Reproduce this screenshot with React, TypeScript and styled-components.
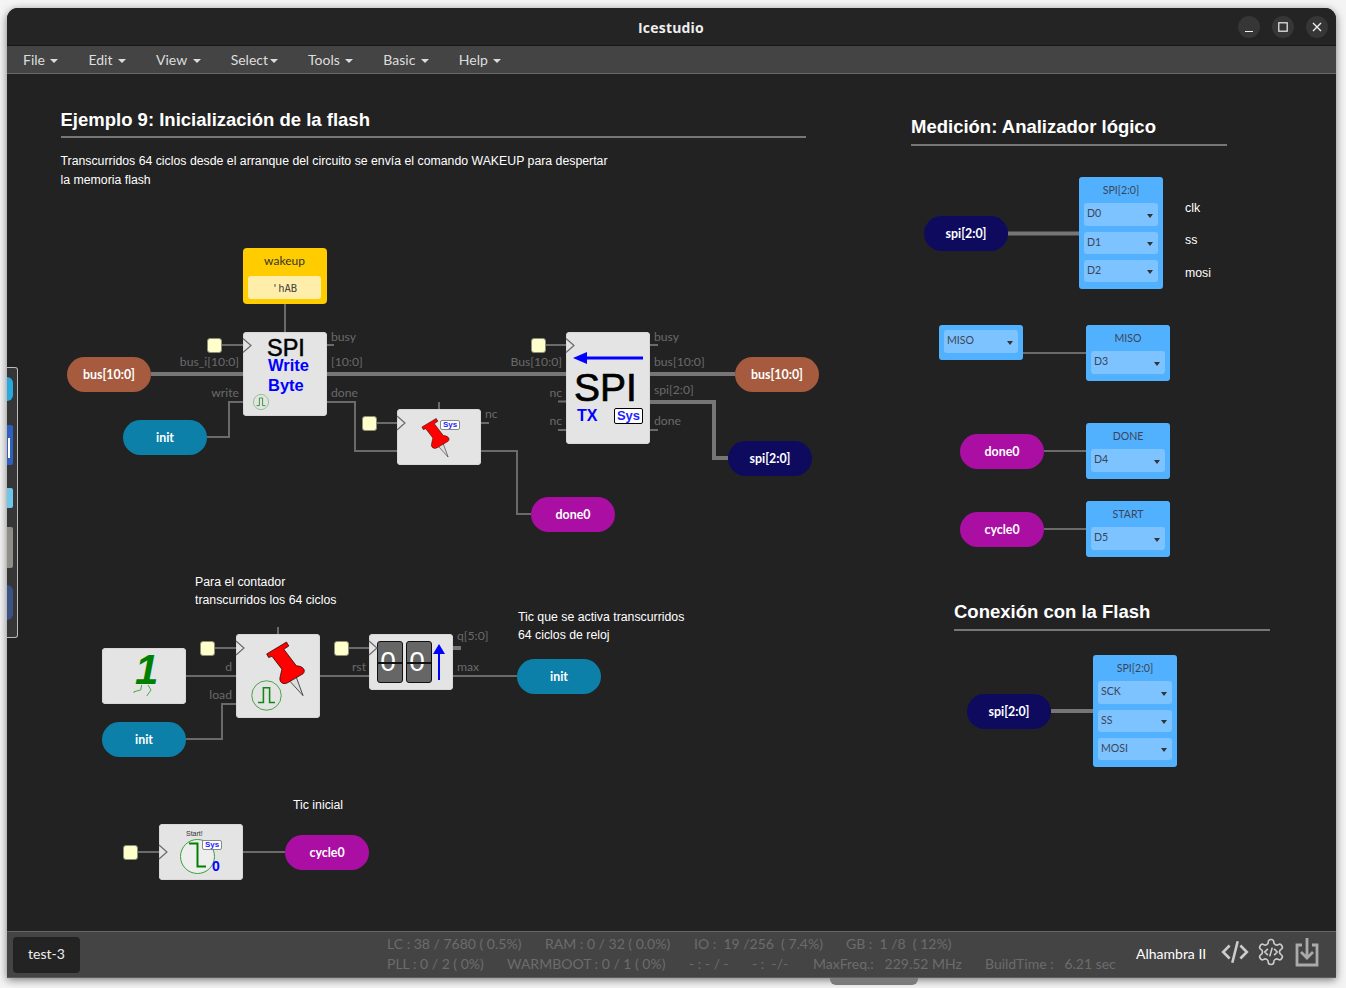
import React from 'react';
import styled, { createGlobalStyle, css } from 'styled-components';

const Global = createGlobalStyle`
  html, body { margin: 0; padding: 0; background: #fff; overflow: hidden; }
  body { font-family: Lato, "Liberation Sans", sans-serif; }
`;

const Page = styled.div`
  width: 1346px; height: 988px; padding: 8px 0 0 7px; box-sizing: border-box; position: relative; overflow: hidden;
  background: #f4f4f4;
`;
const Window = styled.div`
  width: 1329px; height: 970px; display: flex; flex-direction: column;
  border-radius: 11px 11px 0 0; background: #222; overflow: hidden;
  box-shadow: 0 2px 9px rgba(0,0,0,.5);
`;
const TitleBar = styled.header`
  height: 37px; flex: none; position: relative; display: flex; align-items: center; justify-content: center;
  background: #242424; border-bottom: 1px solid #161616; box-sizing: content-box;
`;
const Title = styled.div`
  font: 700 14px "Open Sans", Lato, sans-serif; color: #eee; letter-spacing: .2px;
  margin-left: -1px; margin-top: 2px;
`;
const WinControls = styled.div`
  position: absolute; right: 8px; top: 8px; display: flex; gap: 12px;
`;
const WinButton = styled.div`
  width: 22px; height: 22px; border-radius: 50%; background: #363636; display: flex; align-items: center; justify-content: center;
`;
const Menu = styled.nav`
  height: 27px; flex: none; background: #444; border-bottom: 1px solid #6a6a6a; display: flex; align-items: center; padding-left: 1px;
`;
const MenuItem = styled.div<{ $tight?: boolean }>`
  padding: 0 15px; color: #ddd; font-size: 14px; display: flex; align-items: center; white-space: nowrap;
  &::after {
    content: ''; margin-left: ${p => (p.$tight ? 2 : 5.5)}px; margin-top: 2px;
    border-left: 4px solid transparent; border-right: 4px solid transparent; border-top: 4px solid #ddd;
  }
`;
const Canvas = styled.main`
  flex: 1; position: relative; background: #222; overflow: hidden;
`;
const Wires = styled.svg`
  position: absolute; left: 0; top: 0; width: 1329px; height: 857px;
`;
const at = css<{ $x: number; $y: number }>`
  position: absolute; left: ${p => p.$x - 7}px; top: ${p => p.$y - 74}px;
`;
const Heading = styled.h2<{ $x: number; $y: number; $w: number; $h: number }>`
  ${at}; margin: 0; width: ${p => p.$w}px; box-sizing: border-box; height: ${p => p.$h}px;
  font: 700 18.500px/24px "Liberation Sans", sans-serif; color: #fff;
  border-bottom: 2px solid #777;
`;
const Note = styled.div<{ $x: number; $y: number }>`
  ${at}; font: 12.300px/18.500px "Liberation Sans", sans-serif; color: #fff; white-space: nowrap;
`;
const Port = styled.span<{ $x?: number; $right?: number; $y: number }>`
  position: absolute; top: ${p => p.$y - 74 - 8}px; height: 16px; line-height: 16px;
  ${p => (p.$right !== undefined ? `right: ${1336 - p.$right}px;` : `left: ${(p.$x ?? 0) - 7}px;`)}
  font: 12.200px/16px Lato, sans-serif; color: #6a6a6a; white-space: nowrap;
`;
const Pill = styled.div<{ $x: number; $y: number; $c: string }>`
  ${at}; width: 84px; height: 35px; padding-bottom: 0; box-sizing: border-box; border-radius: 18px; background: ${p => p.$c};
  display: flex; align-items: center; justify-content: center;
  color: #fff; font: 700 12.400px Lato, sans-serif;
`;
const Pin = styled.div<{ $x: number; $y: number }>`
  ${at}; width: 15px; height: 15px; box-sizing: border-box; border-radius: 3px; background: #ffffcc; border: 1px solid #8d8d78;
`;
const Block = styled.div<{ $x: number; $y: number; $w?: number; $h: number }>`
  ${at}; width: ${p => p.$w ?? 84}px; height: ${p => p.$h}px; background: #e4e4e4; border-radius: 4px;
  box-shadow: inset 0 0 0 1px #d8d8d8; overflow: visible;
`;
const Constant = styled.div<{ $x: number; $y: number }>`
  ${at}; width: 84px; height: 56px; box-sizing: border-box; padding: 0 6px 0 5px; background: #ffcc00; border-radius: 4px;
  display: flex; flex-direction: column; align-items: stretch; text-align: center;
  font: 12px Lato, sans-serif; color: #333;
`;
const ConstantLabel = styled.div`
  height: 28px; line-height: 26px;
`;
const ConstantValue = styled.div`
  height: 23px; background: #ffeeaa; border-radius: 3px; font: 10.500px/25px "DejaVu Sans Mono", monospace; color: #444;
`;
const SpiSymbol = styled.div`
  display: flex; flex-direction: column; align-items: flex-start; padding: 4px 0 0 24px; font-family: "Liberation Sans", sans-serif;
`;
const SpiWord = styled.div`
  font-size: 23.500px; line-height: 19px; color: #000; -webkit-text-stroke: .5px #000; padding-top: 3px; height: 16px;
`;
const BlueWord = styled.div<{ $ml?: number; $size?: number }>`
  font-size: ${p => p.$size ?? 16.500}px; font-weight: 700; line-height: 20px; color: #0000ff; margin-left: ${p => p.$ml ?? 0}px;
`;
const TxSymbol = styled.div`
  display: flex; flex-direction: column; padding: 37px 7px 0 8px; font-family: "Liberation Sans", sans-serif;
`;
const TxWord = styled.div`
  font-size: 39px; line-height: 38px; color: #000; -webkit-text-stroke: .7px #000;
`;
const TxRow = styled.div`
  display: flex; align-items: center; justify-content: space-between; margin: 1px 0 0 3px; height: 16px;
`;
const Sys = styled.div<{ $small?: boolean }>`
  background: #fff; color: #2222ff; font-family: "Liberation Sans", sans-serif; font-weight: 700; text-align: center; box-sizing: border-box;
  ${p => (p.$small
    ? `position:absolute; width:20px; height:10px; font-size:8px; line-height:8px; border:1px solid #888; border-radius:2px;`
    : `width:29px; height:16px; font-size:13px; line-height:14px; border:1px solid #000; border-radius:2px;`)}
`;
const Draw = styled.svg<{ $l: number; $t: number }>`
  position: absolute; left: ${p => p.$l}px; top: ${p => p.$t}px; overflow: visible;
`;
const OneDigit = styled.div`
  position: absolute; left: 33px; top: 0; font: italic 700 42px/44px "Liberation Sans", sans-serif; color: #008000;
`;
const Flip = styled.div`
  width: 26px; height: 42px; box-sizing: border-box; padding-right: 4px; background: #666; border: 1px solid #111; border-radius: 3px;
  display: flex; align-items: center; justify-content: center; color: #fff; font: 28px/40px "Liberation Sans", sans-serif; position: relative;
  &::after { content: ''; position: absolute; left: -1px; right: -1px; top: 20px; height: 2px; background: #111; }
`;
const FlipRow = styled.div`
  position: absolute; left: 8px; top: 7px; display: flex; gap: 3px;
`;
const StartLabel = styled.div`
  position: absolute; left: 27px; top: 6px; font: 7px/8px "Liberation Sans", sans-serif; color: #333;
`;
const BlueZero = styled.div`
  position: absolute; left: 53px; top: 34px; font: 700 14px/16px "Liberation Sans", sans-serif; color: #0000ff;
`;
const Chip = styled.div<{ $x: number; $y: number }>`
  ${at}; width: 84px; box-sizing: border-box; padding: 5px 5px 7px; background: #52b1ff; border-radius: 3px;
  display: flex; flex-direction: column; gap: 5.800px;
  font: 10.600px Lato, sans-serif; color: #3a4658;
`;
const ChipTitle = styled.div`
  height: 15.500px; line-height: 17px; text-align: center;
`;
const ChipRow = styled.div`
  height: 22.500px; border-radius: 3px; background: #7dc3ff; display: flex; align-items: flex-start; justify-content: space-between;
  padding: 3px 3px 0 3px; box-sizing: border-box; line-height: 14px;
  &::after {
    content: ''; margin-top: 7.500px; margin-right: 2.500px;
    border-left: 3.500px solid transparent; border-right: 3.500px solid transparent; border-top: 4.500px solid #333;
  }
`;
const Footer = styled.footer`
  height: 47px; flex: none; box-sizing: border-box; background: #444; border-top: 1px solid #666; border-bottom: 1px solid #5c5c5c;
  display: flex; align-items: center; padding: 0 17px 0 6px; position: relative;
`;
const ProjectTag = styled.div`
  width: 67px; height: 36px; flex: none; border-radius: 4px; background: #232323; color: #eee; font: 14px/34px Lato, sans-serif; text-align: center;
`;
const Stats = styled.div`
  margin-left: 307px; margin-top: -2px; display: flex; flex-direction: column; gap: 2px;
  font: 14px/18px Lato, sans-serif; color: #6c6c6c; white-space: nowrap;
`;
const StatRow = styled.div`
  display: flex;
`;
const Stat = styled.span<{ $w: number }>`
  width: ${p => p.$w}px; white-space: pre;
`;
const Board = styled.div`
  position: absolute; left: 1129px; top: 13px; color: #fff; font: 14px/18px Lato, sans-serif; white-space: nowrap;
`;
const FootIcons = styled.div`
  margin-left: auto; display: flex; align-items: center; gap: 7px; color: #ccc; margin-top: -5px;
`;
const Dock = styled.aside`
  position: absolute; left: 7px; top: 367px; width: 11px; height: 271px; box-sizing: border-box; background: #363636;
  border: 1px solid #bbb; border-left: none; border-radius: 0 3px 3px 0;
`;
const DockItem = styled.div<{ $t: number; $h: number; $w?: number; $c: string; $r?: string }>`
  position: absolute; left: 0; top: ${p => p.$t}px; width: ${p => p.$w ?? 6}px; height: ${p => p.$h}px; background: ${p => p.$c};
  border-radius: ${p => p.$r ?? '0 2px 2px 0'};
`;
const DockMark = styled.div`
  position: absolute; left: 1px; top: 13px; width: 2px; height: 20px; background: #fff;
`;
const Grabber = styled.div`
  position: absolute; left: 830px; top: 978px; width: 88px; height: 7px; background: #7b7b7b; border-radius: 0 0 6px 6px;
`;

const PushPin: React.FC<{ w: number; h: number; l: number; t: number }> = ({ w, h, l, t }) => (
  <Draw $l={l} $t={t} width={w} height={h} viewBox="522 58 130 172">
    <path d="M598 180 L640 226 L618 166 Z" fill="#ddd" stroke="#000" strokeWidth="2" />
    <path d="M530 100 L590 64 L597 76 L582 86 L620 136 C640 136 650 150 640 160 L592 188 C578 194 566 184 571 168 L576 146 L546 107 L536 111 Z"
      fill="#ff0000" stroke="#000" strokeWidth="2" />
  </Draw>
);
const Pulse: React.FC<{ r: number; l: number; t: number }> = ({ r, l, t }) => (
  <Draw $l={l} $t={t} width={r * 2} height={r * 2} viewBox="0 0 40 40">
    <circle cx="20" cy="20" r="19" fill="none" stroke="#3aa03a" strokeWidth="1.2" />
    <path d="M9 29 H16 V10 H24 V29 H31" fill="none" stroke="#118811" strokeWidth="2" />
  </Draw>
);

const W = { thin: 2, bus: 4 };
const thin = [
  'M285 304V332', 'M222 345H243', 'M327 345H334', 'M207 437H229V402H243', 'M327 402H355V451H397',
  'M376 423H397', 'M439 402V409', 'M481 423H489', 'M481 451H517V514H531', 'M545 345H566', 'M650 345H658',
  'M558 401.500H566', 'M558 430H566', 'M650 430H658', 'M186 676H236', 'M186 739H222V704H236', 'M215 648H236',
  'M278 627V634', 'M320 676H369', 'M349 648H369', 'M453 676H517', 'M138 852H159', 'M243 852H285',
  'M1023 353H1086', 'M1044 451H1086', 'M1044 529H1086',
];
const thick = [
  'M151 374H243', 'M327 374H566', 'M650 374H735', 'M650 402H714V458H728', 'M453 648H461',
  'M1008 233.500H1079', 'M1051 711H1093',
];
const clocks: [number, number][] = [[243, 345.5], [397, 423], [566, 345.5], [236, 648], [369, 648], [159, 852]];

export default function App() {
  return (
    <Page>
      <Global />
      <Window>
        <TitleBar>
          <Title>Icestudio</Title>
          <WinControls>
            <WinButton>
              <svg width="12" height="12" viewBox="0 0 12 12"><path d="M2 10.500H10" stroke="#eee" strokeWidth="1.200" /></svg>
            </WinButton>
            <WinButton>
              <svg width="10" height="10" viewBox="0 0 10 10"><rect x=".8" y=".8" width="8.400" height="8.400" fill="none" stroke="#eee" strokeWidth="1.200" /></svg>
            </WinButton>
            <WinButton>
              <svg width="10" height="10" viewBox="0 0 10 10"><path d="M1 1L9 9M9 1L1 9" stroke="#eee" strokeWidth="1.400" /></svg>
            </WinButton>
          </WinControls>
        </TitleBar>
        <Menu>
          <MenuItem>File</MenuItem>
          <MenuItem>Edit</MenuItem>
          <MenuItem>View</MenuItem>
          <MenuItem $tight>Select</MenuItem>
          <MenuItem>Tools</MenuItem>
          <MenuItem>Basic</MenuItem>
          <MenuItem>Help</MenuItem>
        </Menu>
        <Canvas>
          <Wires viewBox="7 74 1329 857">
            {thin.map(d => <path key={d} d={d} fill="none" stroke="#6a6a6a" strokeWidth={W.thin} />)}
            {thick.map(d => <path key={d} d={d} fill="none" stroke="#767676" strokeWidth={W.bus} />)}
          </Wires>

          <Heading $x={60.5} $y={108} $w={745} $h={30}>Ejemplo 9: Inicialización de la flash</Heading>
          <Note $x={60.5} $y={152}>Transcurridos 64 ciclos desde el arranque del circuito se envía el comando WAKEUP para despertar<br />la memoria flash</Note>
          <Heading $x={911} $y={115} $w={316} $h={31}>Medición: Analizador lógico</Heading>
          <Heading $x={954} $y={600} $w={316} $h={31}>Conexión con la Flash</Heading>
          <Note $x={195} $y={573}>Para el contador</Note>
          <Note $x={195} $y={591}>transcurridos los 64 ciclos</Note>
          <Note $x={518} $y={608}>Tic que se activa transcurridos</Note>
          <Note $x={518} $y={626}>64 ciclos de reloj</Note>
          <Note $x={293} $y={796}>Tic inicial</Note>
          <Note $x={1185} $y={199}>clk</Note>
          <Note $x={1185} $y={231}>ss</Note>
          <Note $x={1185} $y={264}>mosi</Note>

          <Port $x={331} $y={337}>busy</Port>
          <Port $x={331} $y={362}>[10:0]</Port>
          <Port $x={331} $y={393}>done</Port>
          <Port $right={239} $y={362}>bus_i[10:0]</Port>
          <Port $right={239} $y={393}>write</Port>
          <Port $x={485} $y={414}>nc</Port>
          <Port $right={562} $y={362}>Bus[10:0]</Port>
          <Port $right={562} $y={393}>nc</Port>
          <Port $right={562} $y={421}>nc</Port>
          <Port $x={654} $y={337}>busy</Port>
          <Port $x={654} $y={362}>bus[10:0]</Port>
          <Port $x={654} $y={390}>spi[2:0]</Port>
          <Port $x={654} $y={421}>done</Port>
          <Port $right={232} $y={667}>d</Port>
          <Port $right={232} $y={695}>load</Port>
          <Port $right={366} $y={667}>rst</Port>
          <Port $x={457} $y={636}>q[5:0]</Port>
          <Port $x={457} $y={667}>max</Port>

          <Constant $x={243} $y={248}>
            <ConstantLabel>wakeup</ConstantLabel>
            <ConstantValue>'hAB</ConstantValue>
          </Constant>

          <Block $x={243} $y={332} $h={84}>
            <SpiSymbol>
              <SpiWord>SPI</SpiWord>
              <BlueWord $ml={1}>Write</BlueWord>
              <BlueWord $ml={1}>Byte</BlueWord>
            </SpiSymbol>
            <Pulse r={8} l={10} t={62} />
          </Block>

          <Block $x={397} $y={409} $h={56}>
            <PushPin w={31} h={41} l={23} t={8} />
            <Sys $small style={{ left: 43, top: 11 }}>Sys</Sys>
          </Block>

          <Block $x={566} $y={332} $h={112}>
            <TxSymbol>
              <Draw $l={7} $t={20} width={70} height={12} viewBox="0 0 70 12">
                <path d="M13 6H70" stroke="#0000ff" strokeWidth="3" />
                <path d="M0 6L14 0V12Z" fill="#0000ff" />
              </Draw>
              <TxWord>SPI</TxWord>
              <TxRow>
                <BlueWord $size={16}>TX</BlueWord>
                <Sys>Sys</Sys>
              </TxRow>
            </TxSymbol>
          </Block>

          <Block $x={102} $y={648} $h={56}>
            <OneDigit>1</OneDigit>
            <Draw $l={0} $t={0} width={84} height={56} viewBox="0 0 84 56">
              <path d="M39.700 37L38.700 42L32 43.700V45M46 37L49 42L44.700 48" fill="none" stroke="#4aa84a" strokeWidth="1" />
            </Draw>
          </Block>

          <Block $x={236} $y={634} $h={84}>
            <PushPin w={43} h={57} l={28} t={6} />
            <Pulse r={15.5} l={15} t={46} />
          </Block>

          <Block $x={369} $y={634} $h={56}>
            <FlipRow>
              <Flip>0</Flip>
              <Flip>0</Flip>
            </FlipRow>
            <Draw $l={64} $t={10} width={12} height={37} viewBox="0 0 12 37">
              <path d="M6 8V36" stroke="#0000ff" strokeWidth="2" />
              <path d="M6 0L12 10H0Z" fill="#0000ff" />
            </Draw>
          </Block>

          <Block $x={159} $y={824} $h={56}>
            <StartLabel>Start!</StartLabel>
            <Draw $l={21} $t={15} width={35} height={35} viewBox="0 0 35 35">
              <circle cx="17.500" cy="17.500" r="17" fill="#eee" stroke="#3aa03a" strokeWidth="1" />
              <path d="M9 4.500H17.500V27.500H26" fill="none" stroke="#008000" strokeWidth="2" />
            </Draw>
            <Sys $small style={{ left: 43, top: 16 }}>Sys</Sys>
            <BlueZero>0</BlueZero>
          </Block>

          <Pill $x={67} $y={357} $c="#a65a3e">bus[10:0]</Pill>
          <Pill $x={123} $y={420} $c="#0d80aa">init</Pill>
          <Pill $x={735} $y={357} $c="#a65a3e">bus[10:0]</Pill>
          <Pill $x={728} $y={441} $c="#0e0b5f">spi[2:0]</Pill>
          <Pill $x={531} $y={497} $c="#aa0ea2">done0</Pill>
          <Pill $x={102} $y={722} $c="#0d80aa">init</Pill>
          <Pill $x={517} $y={659} $c="#0d80aa">init</Pill>
          <Pill $x={285} $y={835} $c="#aa0ea2">cycle0</Pill>
          <Pill $x={924} $y={216} $c="#0e0b5f">spi[2:0]</Pill>
          <Pill $x={960} $y={434} $c="#aa0ea2">done0</Pill>
          <Pill $x={960} $y={512} $c="#aa0ea2">cycle0</Pill>
          <Pill $x={967} $y={694} $c="#0e0b5f">spi[2:0]</Pill>

          <Pin $x={207} $y={338} />
          <Pin $x={362} $y={416} />
          <Pin $x={531} $y={338} />
          <Pin $x={200} $y={641} />
          <Pin $x={334} $y={641} />
          <Pin $x={123} $y={845} />

          <Chip $x={1079} $y={177}>
            <ChipTitle>SPI[2:0]</ChipTitle>
            <ChipRow>D0</ChipRow>
            <ChipRow>D1</ChipRow>
            <ChipRow>D2</ChipRow>
          </Chip>
          <Chip $x={939} $y={325}>
            <ChipRow>MISO</ChipRow>
          </Chip>
          <Chip $x={1086} $y={325}>
            <ChipTitle>MISO</ChipTitle>
            <ChipRow>D3</ChipRow>
          </Chip>
          <Chip $x={1086} $y={423}>
            <ChipTitle>DONE</ChipTitle>
            <ChipRow>D4</ChipRow>
          </Chip>
          <Chip $x={1086} $y={501}>
            <ChipTitle>START</ChipTitle>
            <ChipRow>D5</ChipRow>
          </Chip>
          <Chip $x={1093} $y={655}>
            <ChipTitle>SPI[2:0]</ChipTitle>
            <ChipRow>SCK</ChipRow>
            <ChipRow>SS</ChipRow>
            <ChipRow>MOSI</ChipRow>
          </Chip>

          <Wires viewBox="7 74 1329 857">
            {clocks.map(([x, y]) => (
              <path key={x} d={`M${x} ${y - 7}L${x + 8} ${y}L${x} ${y + 7}`} fill="none" stroke="#6a6a6a" strokeWidth="1.200" />
            ))}
          </Wires>
        </Canvas>
        <Footer>
          <ProjectTag>test-3</ProjectTag>
          <Stats>
            <StatRow>
              <Stat $w={158}>LC : 38 / 7680 ( 0.5%)</Stat>
              <Stat $w={149}>RAM : 0 / 32 ( 0.0%)</Stat>
              <Stat $w={152}>IO :  19 /256  ( 7.4%)</Stat>
              <Stat $w={120}>GB :  1 /8  ( 12%)</Stat>
            </StatRow>
            <StatRow>
              <Stat $w={120}>PLL : 0 / 2 ( 0%)</Stat>
              <Stat $w={182}>WARMBOOT : 0 / 1 ( 0%)</Stat>
              <Stat $w={63}>- : - / -</Stat>
              <Stat $w={61}>- :  -/-</Stat>
              <Stat $w={172}>MaxFreq.:   229.52 MHz</Stat>
              <Stat $w={132}>BuildTime :   6.21 sec</Stat>
            </StatRow>
          </Stats>
          <Board>Alhambra II</Board>
          <FootIcons>
            <svg width="28" height="26" viewBox="0 0 26 24" fill="none" stroke="#ccc" strokeWidth="2.400">
              <path d="M8 6L2 12L8 18M18 6L24 12L18 18M15.500 2L10.500 22" />
            </svg>
            <svg width="30" height="30" viewBox="0 0 24 24" fill="none" stroke="#ccc" strokeWidth="1.300">
              <path d="M12.220 2h-.44a2 2 0 0 0-2 2v.18a2 2 0 0 1-1 1.730l-.43.250a2 2 0 0 1-2 0l-.150-.080a2 2 0 0 0-2.730.730l-.220.380a2 2 0 0 0 .730 2.730l.150.100a2 2 0 0 1 1 1.720v.510a2 2 0 0 1-1 1.740l-.150.090a2 2 0 0 0-.730 2.730l.220.380a2 2 0 0 0 2.730.730l.150-.080a2 2 0 0 1 2 0l.430.250a2 2 0 0 1 1 1.730V20a2 2 0 0 0 2 2h.440a2 2 0 0 0 2-2v-.18a2 2 0 0 1 1-1.730l.430-.250a2 2 0 0 1 2 0l.150.080a2 2 0 0 0 2.730-.730l.220-.390a2 2 0 0 0-.730-2.730l-.150-.080a2 2 0 0 1-1-1.740v-.500a2 2 0 0 1 1-1.740l.150-.090a2 2 0 0 0 .730-2.730l-.220-.380a2 2 0 0 0-2.730-.730l-.150.080a2 2 0 0 1-2 0l-.430-.250a2 2 0 0 1-1-1.730V4a2 2 0 0 0-2-2z" />
              <path d="M9.500 9.500L7 12L9.500 14.500M14.500 9.500L17 12L14.500 14.500M13 8.500L11 15.500" />
            </svg>
            <svg width="24" height="30" viewBox="0 0 24 30" fill="none" stroke="#aaa" strokeWidth="2.800" style={{ marginLeft: 2 }}>
              <path d="M7 8H2V28H22V8H17M12 1V21M6 15L12 21L18 15" />
            </svg>
          </FootIcons>
        </Footer>
      </Window>
      <Dock>
        <DockItem $t={9} $h={24} $c="#2aa9e0" $r="0 6px 6px 0" />
        <DockItem $t={57} $h={40} $c="#2f5fbf"><DockMark /></DockItem>
        <DockItem $t={120} $h={20} $c="#6fc6e8" />
        <DockItem $t={159} $h={41} $c="#8f8f88" />
        <DockItem $t={217} $h={35} $c="#3a5384" $r="0 12px 12px 0" />
      </Dock>
      <Grabber />
    </Page>
  );
}
